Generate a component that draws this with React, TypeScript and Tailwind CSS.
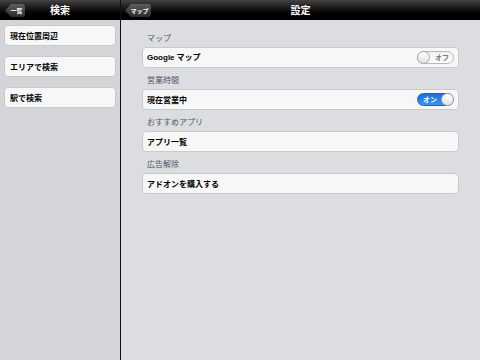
import React from 'react';

const jp = "font-['Noto_Sans_CJK_JP','Noto_Sans',sans-serif]";

const BackButton: React.FC<{ label: string; width: string }> = ({ label, width }) => (
  <div
    className={`relative h-[13px] ${width} flex items-center justify-center pl-[3px] bg-gradient-to-b from-[#5e5e5e] to-[#2a2a2a] rounded-r-[3px] [clip-path:polygon(6px_0,100%_0,100%_100%,6px_100%,0_50%)] text-[6px] font-bold text-white`}
  >
    {label}
  </div>
);

const Toggle: React.FC<{ on: boolean }> = ({ on }) =>
  on ? (
    <div className="relative w-[37px] h-[13px] rounded-full bg-gradient-to-b from-[#1b6fd6] to-[#3a95f0] border border-[#1662c0] flex items-center">
      <span className="ml-[5px] text-[7px] font-bold text-white">オン</span>
      <div className="absolute right-[-1px] top-[-1px] w-[13px] h-[13px] rounded-full bg-gradient-to-b from-[#ffffff] to-[#e2e2e2] border border-[#a8a8a8]" />
    </div>
  ) : (
    <div className="relative w-[37px] h-[13px] rounded-full bg-gradient-to-b from-[#f0f0f0] to-[#ffffff] border border-[#b9b9b9] flex items-center justify-end">
      <span className="mr-[4px] text-[7px] font-bold text-[#7a7a7a]">オフ</span>
      <div className="absolute left-[-1px] top-[-1px] w-[13px] h-[13px] rounded-full bg-gradient-to-b from-[#ffffff] to-[#e2e2e2] border border-[#a8a8a8]" />
    </div>
  );

const Row: React.FC<{ children: React.ReactNode; right?: React.ReactNode; pad?: string }> = ({ children, right, pad = 'px-[4px]' }) => (
  <div className={`h-[21px] rounded-[4px] bg-[#f7f7f7] border border-[#c9cacd] flex items-center justify-between ${pad} text-[8px] font-bold text-black`}>
    <span>{children}</span>
    {right}
  </div>
);

const Section: React.FC<{ title: string; children: React.ReactNode }> = ({ title, children }) => (
  <div className="flex flex-col">
    <div className="leading-[11px] text-[8px] text-[#4f5666] pl-[5px] mb-[4px]">{title}</div>
    {children}
  </div>
);

export default function App() {
  return (
    <div className={`w-[480px] h-[360px] flex bg-black overflow-hidden ${jp}`}>
      <div className="w-[120px] flex flex-col bg-[#d4d5d9]">
        <div className="h-[20px] flex items-center relative bg-gradient-to-b from-[#444] via-[#111] to-[#000] border-b border-[#000]">
          <div className="absolute left-[5px] top-[4px]">
            <BackButton label="一覧" width="w-[20px]" />
          </div>
          <div className="flex-1 text-center text-[10px] font-bold text-white">検索</div>
        </div>
        <div className="flex flex-col gap-[10px] px-[4px] pt-[5px]">
          <Row pad="px-[5px]">現在位置周辺</Row>
          <Row pad="px-[5px]">エリアで検索</Row>
          <Row pad="px-[5px]">駅で検索</Row>
        </div>
      </div>
      <div className="w-[1px] bg-[#111]" />
      <div className="flex-1 flex flex-col bg-[#dcdde1]">
        <div className="h-[20px] flex items-center relative bg-gradient-to-b from-[#444] via-[#111] to-[#000] border-b border-[#000]">
          <div className="absolute left-[4px] top-[4px]">
            <BackButton label="マップ" width="w-[26px]" />
          </div>
          <div className="flex-1 text-center text-[10px] font-bold text-white">設定</div>
        </div>
        <div className="flex flex-col gap-[6px] pt-[12px] pl-[21px] pr-[21px]">
          <Section title="マップ">
            <Row right={<Toggle on={false} />}>
              <span className="font-['Liberation_Sans','Noto_Sans_CJK_JP',sans-serif]">Google</span> マップ
            </Row>
          </Section>
          <Section title="営業時間">
            <Row right={<Toggle on={true} />}>現在営業中</Row>
          </Section>
          <Section title="おすすめアプリ">
            <Row>アプリ一覧</Row>
          </Section>
          <Section title="広告解除">
            <Row>アドオンを購入する</Row>
          </Section>
        </div>
      </div>
    </div>
  );
}
